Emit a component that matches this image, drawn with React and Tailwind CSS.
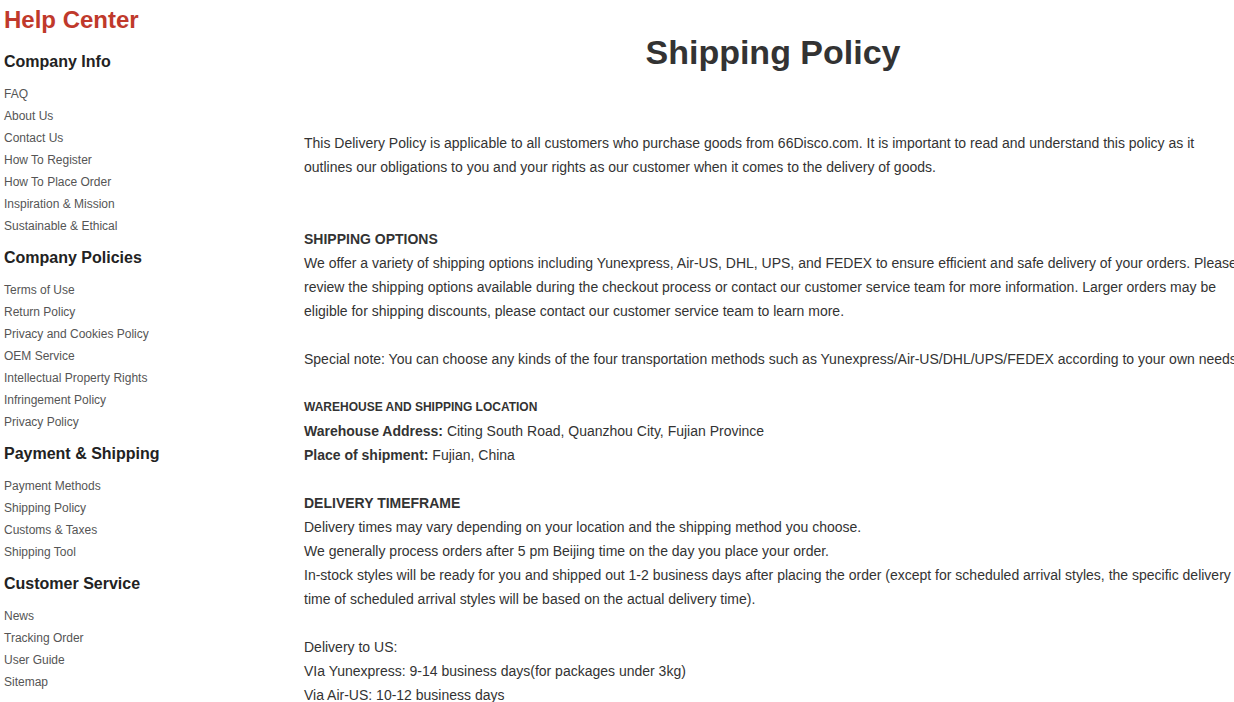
// Help center page — sidebar of policy links and the shipping policy article.

const SECTIONS = [
  {
    title: 'Company Info',
    links: ['FAQ', 'About Us', 'Contact Us', 'How To Register', 'How To Place Order', 'Inspiration & Mission', 'Sustainable & Ethical'],
  },
  {
    title: 'Company Policies',
    links: ['Terms of Use', 'Return Policy', 'Privacy and Cookies Policy', 'OEM Service', 'Intellectual Property Rights', 'Infringement Policy', 'Privacy Policy'],
  },
  {
    title: 'Payment & Shipping',
    links: ['Payment Methods', 'Shipping Policy', 'Customs & Taxes', 'Shipping Tool'],
  },
  {
    title: 'Customer Service',
    links: ['News', 'Tracking Order', 'User Guide', 'Sitemap'],
  },
];

function Sidebar() {
  return (
    <aside className="w-[304px] shrink-0 pl-1">
      <div className="h-[41px] text-[24px] leading-[40px] font-bold text-[#c0392b]">Help Center</div>
      {SECTIONS.map((s) => (
        <div key={s.title}>
          <h3 className="my-[9px] text-[16px] leading-[24px] font-bold text-[#222]">{s.title}</h3>
          <ul>
            {s.links.map((l) => (
              <li key={l}>
                <a href="#" className="block text-[12px] leading-[22px] text-[#555]">{l}</a>
              </li>
            ))}
          </ul>
        </div>
      ))}
    </aside>
  );
}

export default function App() {
  return (
    <div className="w-[1234px] overflow-hidden bg-white font-['Liberation_Sans',Arial,sans-serif] text-[#333]">
      <div className="flex w-[1260px]">
        <Sidebar />

        <main className="w-[938px] shrink-0 pt-[32px] text-[14px] leading-[24px]">
          <h1 className="text-center text-[34px] leading-[40px] font-bold text-[#333]">Shipping Policy</h1>

          <p className="mt-[59px]">
            This Delivery Policy is applicable to all customers who purchase goods from 66Disco.com. It is important to read and understand this policy as it
            outlines our obligations to you and your rights as our customer when it comes to the delivery of goods.
          </p>

          <h4 className="mt-12 font-bold">SHIPPING OPTIONS</h4>
          <p>
            We offer a variety of shipping options including Yunexpress, Air-US, DHL, UPS, and FEDEX to ensure efficient and safe delivery of your orders. Please
            review the shipping options available during the checkout process or contact our customer service team for more information. Larger orders may be
            eligible for shipping discounts, please contact our customer service team to learn more.
          </p>
          <p className="mt-6 whitespace-nowrap">
            Special note: You can choose any kinds of the four transportation methods such as Yunexpress/Air-US/DHL/UPS/FEDEX according to your own needs.
          </p>

          <h4 className="mt-6 text-[12px] font-bold">WAREHOUSE AND SHIPPING LOCATION</h4>
          <p>
            <b>Warehouse Address:</b> Citing South Road, Quanzhou City, Fujian Province
          </p>
          <p>
            <b>Place of shipment:</b> Fujian, China
          </p>

          <h4 className="mt-6 font-bold">DELIVERY TIMEFRAME</h4>
          <p>Delivery times may vary depending on your location and the shipping method you choose.</p>
          <p>We generally process orders after 5 pm Beijing time on the day you place your order.</p>
          <p>
            In-stock styles will be ready for you and shipped out 1-2 business days after placing the order (except for scheduled arrival styles, the specific delivery
            time of scheduled arrival styles will be based on the actual delivery time).
          </p>

          <div className="mt-6">
            <p>Delivery to US:</p>
            <p>VIa Yunexpress: 9-14 business days(for packages under 3kg)</p>
            <p>Via Air-US: 10-12 business days</p>
            <p>Via DHL/UPS/FEDEX: 5-7 business days</p>
          </div>
        </main>
      </div>
    </div>
  );
}
